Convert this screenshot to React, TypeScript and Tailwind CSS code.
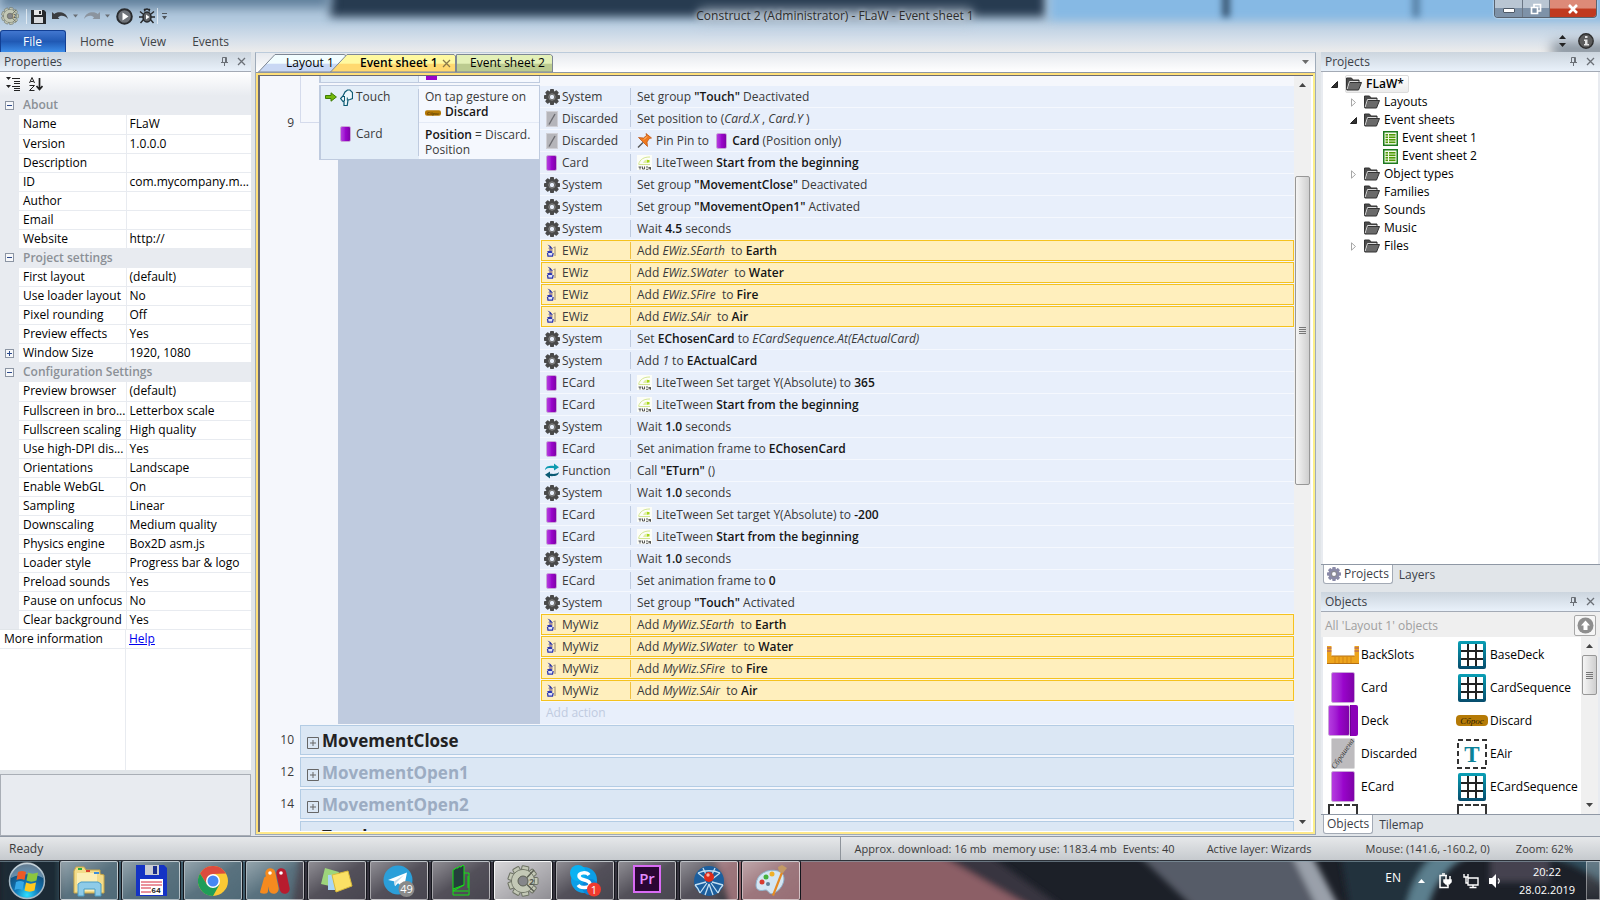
import type { ReactNode } from "react";
import clsx from "clsx";

/* ---------- icons ---------- */

function Gear({ size = 16, color = "#4a4a4a", hole = "#e8effb", teeth = 8 }: { size?: number; color?: string; hole?: string; teeth?: number }) {
  return (
    <svg width={size} height={size} viewBox="0 0 16 16" className="shrink-0">
      {Array.from({ length: teeth }, (_, i) => (
        <rect key={i} x="6" y="0" width="4" height="5" rx="0.8" fill={color} transform={`rotate(${(i * 360) / teeth} 8 8)`} />
      ))}
      <circle cx="8" cy="8" r="6.2" fill={color} />
      <circle cx="8" cy="8" r="3.2" fill="none" stroke="#8a8a8a" strokeWidth="1" />
      <circle cx="8" cy="8" r="2.2" fill={hole} />
    </svg>
  );
}

function ConstructLogo({ size }: { size: number }) {
  return (
    <svg width={size} height={size} viewBox="0 0 32 32" className="shrink-0">
      <g fill="#c3c8b6" stroke="#6d7264" strokeWidth="1">
        {Array.from({ length: 9 }, (_, i) => (
          <rect key={i} x="12.500" y="1" width="7" height="8" rx="1" transform={`rotate(${i * 40 + 10} 16 16)`} />
        ))}
        <circle cx="16" cy="16" r="11.500" />
      </g>
      <circle cx="16" cy="16" r="10.800" fill="#c3c8b6" />
      <circle cx="16" cy="16" r="5" fill="#85868a" stroke="#5b5f54" />
      <path d="M20 12.500L27 5M20 19.500l7 7" stroke="#5b5f54" strokeWidth="1.500" />
      <text x="24.500" y="19.500" textAnchor="middle" fontSize="9" fontWeight="bold" fill="#55594f">2</text>
    </svg>
  );
}

function PurpleCard({ className = "h-4 w-[11px]" }: { className?: string }) {
  return (
    <span
      className={clsx(
        "inline-block shrink-0 rounded-[2px] border border-[#c9a6d8] bg-linear-to-r from-[#b53be0] via-[#9a05cc] to-[#7f02a8]",
        className
      )}
    />
  );
}

function GreyCard() {
  return (
    <svg width="12" height="16" viewBox="0 0 12 16" className="shrink-0">
      <rect x="0.500" y="0.500" width="11" height="15" fill="#b5b5ba" stroke="#d0d0d6" />
      <path d="M3 13.500L9 3" stroke="#6c6c72" strokeWidth="1.400" />
    </svg>
  );
}

function Wizard() {
  return (
    <svg width="11" height="13" viewBox="0 0 11 13" className="shrink-0">
      <path d="M1.500.5l3 1.500 2.500 3-5-.8 2-1z" fill="#2731a8" />
      <path d="M3 5h3.500v2H3.500z" fill="#a88f9a" />
      <path d="M1 7.500c1.500-1 4-1 5.500 0L6 9H2z" fill="#2c37b4" />
      <path d="M2.500 9h4v3h-4z" fill="#dfe3f4" />
      <path d="M1.500 9l.5 3.200h4.500L7.200 9" fill="none" stroke="#2c37b4" strokeWidth="1.300" />
      <path d="M9 3v9M7.500 4L9 2.500" fill="none" stroke="#8a7a6a" strokeWidth="0.900" />
    </svg>
  );
}

function FunctionIcon() {
  return (
    <svg width="16" height="16" viewBox="0 0 16 16" className="shrink-0">
      <path d="M1 7C1.500 3.500 4 2.700 10 2.900V.5l5 3.700-5 3.400V5.200C5 5 3 5 1 7z" fill="#0c9ab0" />
      <path d="M15 9c-.5 3.500-3 4.300-9 4.100v2.400L1 11.800l5-3.400v2.400c5 .2 7 .2 9-1.800z" fill="#0b5a74" />
    </svg>
  );
}

function TweenIcon() {
  return (
    <svg width="15" height="15" viewBox="0 0 15 15" className="mr-1 inline-block align-[-3px]">
      <rect width="15" height="15" fill="#fcfdf8" />
      <path d="M1.500 9.500C3 4 7 2 13 2M2 9.500h11" fill="none" stroke="#d3e692" strokeWidth="1" />
      <path d="M6 8c.8-2.500 2.500-3.500 5-3.500V8z" fill="#e0f0a4" />
      <rect x="10" y="5" width="2.500" height="2.500" fill="#a6d61c" />
      <path d="M1.500 12h3M3 12v2.500M5.500 11.500v2.500h2v-2.500M9 12h2M9 14.300h2M12 14.500V12l1.500 2.500V12" fill="none" stroke="#333" strokeWidth="0.800" />
    </svg>
  );
}

function PinIcon() {
  return (
    <svg width="15" height="15" viewBox="0 0 15 15" className="mr-1 inline-block align-[-3px]">
      <path d="M6 9.500L1 14.500" stroke="#555" strokeWidth="1.400" />
      <path d="M1.500 4.500l5 .5L9.500 2.500 9 .5 14.500 5l-2.200.6-2.300 3.400.5 4.500z" fill="#f07a1e" stroke="#b84c0a" strokeWidth="0.700" />
      <path d="M7 6.500l3-3" stroke="#ffc48a" strokeWidth="1" />
    </svg>
  );
}

function Folder() {
  return (
    <svg width="16" height="14" viewBox="0 0 16 14" className="shrink-0">
      <path d="M.5 12.500V1h5l1.500 2h6v2" fill="#4b4b4b" stroke="#333" />
      <path d="M3.500 5.500h12l-3 7.500H.8z" fill="#6a6a6a" stroke="#333" />
      <path d="M3.500 4.500L1.200 12" stroke="#ddd" strokeWidth="1" />
      <path d="M3.500 4.500h9" stroke="#ddd" strokeWidth="1" />
    </svg>
  );
}

function SheetIcon() {
  return (
    <svg width="15" height="15" viewBox="0 0 15 15" className="shrink-0">
      <rect x="0.750" y="0.750" width="13.500" height="13.500" fill="#f3fbe6" stroke="#1e7a1e" strokeWidth="1.500" />
      {[3, 5.5, 8, 10.5].map((y) => (
        <g key={y} fill="#4f9a06">
          <rect x="2.500" y={y} width="2.500" height="1.600" />
          <rect x="6" y={y} width="6.500" height="1.600" />
        </g>
      ))}
    </svg>
  );
}

function ArrayIcon() {
  return (
    <svg width="28" height="28" viewBox="0 0 28 28">
      <defs>
        <linearGradient id="array-frame" x1="0" y1="0" x2="0" y2="1">
          <stop offset="0" stopColor="#0aa0b6" />
          <stop offset="1" stopColor="#064c6c" />
        </linearGradient>
      </defs>
      <rect width="28" height="28" rx="2" fill="url(#array-frame)" />
      <rect x="3" y="3" width="22" height="22" fill="#222" />
      {[3, 11, 19].map((x) => [3, 11, 19].map((y) => <rect key={`${x}-${y}`} x={x} y={y} width="6" height="6" fill="#fff" />))}
    </svg>
  );
}

function TextObjectIcon() {
  return (
    <svg width="30" height="30" viewBox="0 0 30 30">
      <rect x="1" y="1" width="28" height="28" fill="none" stroke="#333" strokeWidth="2" strokeDasharray="5 3" />
      <text x="15" y="23" textAnchor="middle" fontFamily="Liberation Serif, serif" fontWeight="bold" fontSize="23" fill="#0b8299">T</text>
    </svg>
  );
}

function BackSlotsIcon() {
  return (
    <svg width="32" height="18" viewBox="0 0 32 18">
      <path d="M0 0h4.500v10h23V0H32v18H0z" fill="#eda41c" />
      <path d="M0 17.500h32M4.500 10h23" stroke="#b56f10" />
      <path d="M8 11v6M12 11v6M16 11v6M20 11v6M24 11v6" stroke="#d48512" />
      <path d="M0 5h4.500M27.500 5H32M0 2h4.500M27.500 2H32" stroke="#a0567a" />
    </svg>
  );
}

function DiscardIcon({ small = false }: { small?: boolean }) {
  return (
    <svg width={small ? 16 : 32} height={small ? 6 : 11} viewBox="0 0 32 11" className={small ? "mr-1 inline-block" : ""}>
      <rect width="32" height="11" rx="4" fill="#b57a06" />
      <text x="16" y="8.500" textAnchor="middle" fontFamily="Liberation Serif, serif" fontStyle="italic" fontSize="9" fill="#2c1c02">Сброс</text>
    </svg>
  );
}

function DiscardedIcon() {
  return (
    <svg width="24" height="31" viewBox="0 0 24 31">
      <rect x="0.500" y="0.500" width="23" height="30" rx="1" fill="#bdbbbe" stroke="#d9d8da" />
      <text x="12" y="18" textAnchor="middle" transform="rotate(-56 12 16)" fontFamily="Liberation Serif, serif" fontStyle="italic" fontSize="8" fill="#333">Сброшена</text>
    </svg>
  );
}

function DeckIcon() {
  return (
    <span className="flex">
      <PurpleCard className="h-[31px] w-[22px]" />
      <span className="h-[31px] w-2 rounded-r-[2px] border-l border-[#6d0292] bg-[#8b02b8]" />
    </span>
  );
}

function Expander({ open }: { open: boolean }) {
  return (
    <svg width="9" height="9" viewBox="0 0 9 9" className="block">
      <rect x="0.500" y="0.500" width="8" height="8" fill="#f7f8fa" stroke="#8c95a3" />
      <path d={open ? "M2 4.500h5" : "M2 4.500h5M4.500 2v5"} stroke="#2c4a8c" />
    </svg>
  );
}

function Tri({ dir, className = "" }: { dir: "up" | "down"; className?: string }) {
  return (
    <svg width="7" height="4" viewBox="0 0 7 4" className={className} fill="currentColor">
      <path d={dir === "up" ? "M0 4L3.500 0 7 4z" : "M0 0h7L3.500 4z"} />
    </svg>
  );
}

/* ---------- properties panel ---------- */

type Prop = { name: string; value: string; expandable?: boolean };

const PROPERTIES: { title: string; rows: Prop[] }[] = [
  {
    title: "About",
    rows: [
      { name: "Name", value: "FLaW" },
      { name: "Version", value: "1.0.0.0" },
      { name: "Description", value: "" },
      { name: "ID", value: "com.mycompany.m..." },
      { name: "Author", value: "" },
      { name: "Email", value: "" },
      { name: "Website", value: "http://" },
    ],
  },
  {
    title: "Project settings",
    rows: [
      { name: "First layout", value: "(default)" },
      { name: "Use loader layout", value: "No" },
      { name: "Pixel rounding", value: "Off" },
      { name: "Preview effects", value: "Yes" },
      { name: "Window Size", value: "1920, 1080", expandable: true },
    ],
  },
  {
    title: "Configuration Settings",
    rows: [
      { name: "Preview browser", value: "(default)" },
      { name: "Fullscreen in bro...", value: "Letterbox scale" },
      { name: "Fullscreen scaling", value: "High quality" },
      { name: "Use high-DPI dis...", value: "Yes" },
      { name: "Orientations", value: "Landscape" },
      { name: "Enable WebGL", value: "On" },
      { name: "Sampling", value: "Linear" },
      { name: "Downscaling", value: "Medium quality" },
      { name: "Physics engine", value: "Box2D asm.js" },
      { name: "Loader style", value: "Progress bar & logo" },
      { name: "Preload sounds", value: "Yes" },
      { name: "Pause on unfocus", value: "No" },
      { name: "Clear background", value: "Yes" },
    ],
  },
];

function PanelHeader({ title }: { title: string }) {
  return (
    <div className="flex h-5 shrink-0 items-center justify-between border-b border-[#a3aab5] bg-linear-to-b from-[#ccd5de] to-[#e9f1fa] px-1 text-[#3b4148]">
      <h2>{title}</h2>
      <div className="flex items-center gap-2 pr-px text-[#6b7077]">
        <button aria-label={`Pin ${title}`}>
          <svg width="9" height="9" viewBox="0 0 9 9" fill="none" stroke="currentColor">
            <path d="M2.500 5.500v-5h4v5M1 5.500h7M4.500 5.500V9M5.500.5v5" />
          </svg>
        </button>
        <button aria-label={`Close ${title}`}>
          <svg width="9" height="9" viewBox="0 0 9 9" fill="none" stroke="currentColor" strokeWidth="1.300">
            <path d="M1 1l7 7M8 1L1 8" />
          </svg>
        </button>
      </div>
    </div>
  );
}

function PropertiesPanel() {
  return (
    <aside className="flex w-[251px] shrink-0 flex-col text-black">
      <PanelHeader title="Properties" />
      <div className="flex h-6 shrink-0 items-center gap-2 bg-linear-to-b from-white to-[#e8ebf0] px-[6px] text-[#222]">
        <button aria-label="Categorized">
          <svg width="15" height="14" viewBox="0 0 15 14" fill="currentColor">
            <path d="M0 0h5L2.500 3zM0 8h5L2.500 11zM6 1h8v1H6zM8 4h6v1H8zM8 6h6v1H8zM6 9h8v1H6zM8 11h6v1H8zM8 13h6v1H8z" />
          </svg>
        </button>
        <button aria-label="Sort alphabetically">
          <svg width="14" height="14" viewBox="0 0 14 14" fill="none" stroke="currentColor">
            <path d="M.5 6L3 .5 5.500 6M1.500 4.500h3M.5 8.500h5l-5 5h5" />
            <path d="M10.500 1v11M7.500 9l3 3.500 3-3.500" strokeWidth="1.700" />
          </svg>
        </button>
      </div>
      <table className="w-full table-fixed border-collapse leading-[17px]">
        <colgroup>
          <col className="w-[19px]" />
          <col className="w-[107px]" />
          <col />
        </colgroup>
        {PROPERTIES.map((group) => (
          <tbody key={group.title}>
            <tr className="h-[19px] bg-[#e8ebf0]">
              <td className="p-0 pl-[5px]">
                <Expander open />
              </td>
              <th colSpan={2} className="p-0 pb-[2px] pl-1 text-left font-semibold text-[#8b9096]">
                {group.title}
              </th>
            </tr>
            {group.rows.map((row) => (
              <tr key={row.name} className="h-[19px]">
                <td className="bg-[#e8ebf0] p-0 pl-[5px]">{row.expandable && <Expander open={false} />}</td>
                <td className="overflow-hidden border-r border-b border-[#e8ebf0] bg-white p-0 pb-px pl-1 whitespace-nowrap">{row.name}</td>
                <td className="overflow-hidden border-b border-[#e8ebf0] bg-white p-0 pb-px pl-[3px] whitespace-nowrap">{row.value}</td>
              </tr>
            ))}
          </tbody>
        ))}
      </table>
      <div className="flex flex-1 flex-col bg-white">
        <div className="flex h-[19px] items-center border-b border-[#e8ebf0]">
          <span className="h-full w-[126px] border-r border-[#e8ebf0] pl-1">More information</span>
          <a href="#help" className="pl-[3px] text-[#0000ee] underline">
            Help
          </a>
        </div>
        <div className="w-[126px] flex-1 border-r border-[#e8ebf0]" />
      </div>
      <div className="mt-1 h-[62px] shrink-0 border border-[#a9aeb6] bg-[#e8ebf0]" />
    </aside>
  );
}

/* ---------- event sheet ---------- */

type IconName = "system" | "card" | "discarded" | "wiz" | "function";
type Action = { icon: IconName; object: string; text: ReactNode; selected?: boolean };

const B = ({ children }: { children: ReactNode }) => <b className="font-semibold text-[#151515]">{children}</b>;

const system = (text: ReactNode): Action => ({ icon: "system", object: "System", text });
const eCard = (text: ReactNode): Action => ({ icon: "card", object: "ECard", text });
const wait = (s: string) => system(<>Wait <B>{s}</B> seconds</>);
const wiz = (object: string, element: string): Action => ({
  icon: "wiz",
  object,
  selected: true,
  text: (
    <>
      Add <i>{object}.S{element}</i>&nbsp; to <B>{element}</B>
    </>
  ),
});
const tweenStart = <><TweenIcon />LiteTween <B>Start from the beginning</B></>;

const ACTIONS: Action[] = [
  system(<>Set group <B>"Touch"</B> Deactivated</>),
  { icon: "discarded", object: "Discarded", text: <>Set position to (<i>Card.X</i> , <i>Card.Y</i> )</> },
  {
    icon: "discarded",
    object: "Discarded",
    text: <><PinIcon />Pin Pin to <PurpleCard className="mr-[2px] ml-1 h-4 w-[11px] align-[-4px]" /> <B>Card</B> (Position only)</>,
  },
  { icon: "card", object: "Card", text: tweenStart },
  system(<>Set group <B>"MovementClose"</B> Deactivated</>),
  system(<>Set group <B>"MovementOpen1"</B> Activated</>),
  wait("4.5"),
  wiz("EWiz", "Earth"),
  wiz("EWiz", "Water"),
  wiz("EWiz", "Fire"),
  wiz("EWiz", "Air"),
  system(<>Set <B>EChosenCard</B> to <i>ECardSequence.At(EActualCard)</i></>),
  system(<>Add <i>1</i> to <B>EActualCard</B></>),
  eCard(<><TweenIcon />LiteTween Set target Y(Absolute) to <B>365</B></>),
  eCard(tweenStart),
  wait("1.0"),
  eCard(<>Set animation frame to <B>EChosenCard</B></>),
  { icon: "function", object: "Function", text: <>Call <B>"ETurn"</B> ()</> },
  wait("1.0"),
  eCard(<><TweenIcon />LiteTween Set target Y(Absolute) to <B>-200</B></>),
  eCard(tweenStart),
  wait("1.0"),
  eCard(<>Set animation frame to <B>0</B></>),
  system(<>Set group <B>"Touch"</B> Activated</>),
  wiz("MyWiz", "Earth"),
  wiz("MyWiz", "Water"),
  wiz("MyWiz", "Fire"),
  wiz("MyWiz", "Air"),
];

const ACTION_ICONS: Record<IconName, ReactNode> = {
  system: <Gear />,
  card: <PurpleCard />,
  discarded: <GreyCard />,
  wiz: <Wizard />,
  function: <FunctionIcon />,
};

function ActionRow({ action }: { action: Action }) {
  const { icon, object, text, selected } = action;
  return (
    <div
      className={clsx(
        "flex h-[22px] items-center",
        selected ? "pb-px pl-px" : "border-b border-[#f5f8fe] bg-[#e8effb] pl-px"
      )}
    >
      <div className={clsx("flex h-full flex-1 items-center", selected ? "border border-[#f5c21e] bg-[#ffefbd]" : "border-x border-transparent")}>
        <div className="flex w-5 shrink-0 justify-start pl-[2px]">
          <span className={clsx("flex", icon !== "system" && icon !== "function" && "pl-[2px]")}>{ACTION_ICONS[icon]}</span>
        </div>
        <span className={clsx("flex h-[17px] w-[69px] shrink-0 items-center border-r", selected ? "border-[#f0c040]" : "border-[#bfcbdf]")}>
          {object}
        </span>
        <span className="pl-[6px] whitespace-nowrap">{text}</span>
      </div>
    </div>
  );
}

function Group({ line, name, active = false }: { line?: number; name: string; active?: boolean }) {
  return (
    <div className="mb-[2px] flex h-[30px] shrink-0">
      <span className="w-[34px] pt-[6px] text-right leading-[18px]">{line}</span>
      <div className="ml-[6px] flex flex-1 items-center gap-[3px] border border-[#b3cce4] bg-[#dbe7f4] pl-[6px]">
        <button aria-label={`Expand ${name}`} className="pt-[5px]">
          <svg width="12" height="12" viewBox="0 0 12 12" fill="none" stroke="#666">
            <path d="M.5.5h11v11H.5zM3 6h6M6 3v6" />
          </svg>
        </button>
        <h3 className={clsx("pt-px text-[17px] leading-6 font-bold", active ? "text-[#222]" : "text-[#9cacc2]")}>{name}</h3>
      </div>
    </div>
  );
}

function ScrollBar({ thumb }: { thumb: string }) {
  return (
    <div className="flex w-[17px] shrink-0 flex-col items-center bg-[#f0f0f0] text-[#444]">
      <Tri dir="up" className="my-[7px] shrink-0" />
      <div className="w-full flex-1">
        <div className={clsx("mx-auto flex w-[15px] flex-col items-center justify-center gap-px rounded-[2px] border border-[#979797] bg-linear-to-r from-[#f5f5f5] to-[#cfcfcf]", thumb)}>
          <span className="h-px w-[7px] bg-[#777]" />
          <span className="h-px w-[7px] bg-[#777]" />
          <span className="h-px w-[7px] bg-[#777]" />
          <span className="h-px w-[7px] bg-[#777]" />
        </div>
      </div>
      <Tri dir="down" className="my-[7px] shrink-0" />
    </div>
  );
}

function EventSheet() {
  return (
    <div className="flex min-w-0 flex-1 flex-col overflow-hidden bg-[#f5f7fc] text-[#3a3a3a]">
      {/* tail of the previous event */}
      <div className="flex h-[9px] shrink-0">
        <div className="ml-10 w-[19px] border-l border-[#d5dbec]" />
        <div className="flex h-[7px] w-[221px] border-x border-b border-l-2 border-[#bfcbdf] bg-[#e4eef8]">
          <div className="ml-[97px] flex-1 border-l border-[#bfcbdf] bg-[#f5f8fe] pl-[7px]">
            <div className="h-1 w-[11px] bg-[#9a05cc]" />
          </div>
        </div>
      </div>
      <div className="flex shrink-0">
        <div className="flex h-[75px] w-10 items-center justify-end pr-[6px]">9</div>
        <div className="h-[38px] w-[19px] border-b border-l border-[#d5dbec]" />
        <div className="flex w-[221px] flex-col">
          <div className="flex h-[75px] border border-l-2 border-[#bfcbdf] bg-[#e4eef8]">
            <div className="w-[97px]">
              <div className="flex h-[22px] items-center pl-1">
                <svg width="12" height="10" viewBox="0 0 12 10">
                  <path d="M.5 3.500H6V.8L11.400 5 6 9.200V6.500H.5z" fill="#74b80a" stroke="#3f7d06" />
                </svg>
                <svg width="13" height="17" viewBox="0 0 13 17" className="mr-[3px] ml-[3px]">
                  <path d="M4 16.500V12l-1 .5L.6 9.500 3 7l2-4 2.500-2H10l2.500 2.500v6L10 10.500l-2 .5-.8 5.500z" fill="#eef8fc" stroke="#0d5a72" strokeWidth="1.200" />
                  <path d="M4.500 12V8M7.300 11.500V8.500M3 7.500h2" stroke="#0d5a72" />
                </svg>
                Touch
              </div>
              <div className="mt-[15px] flex h-[22px] items-center gap-[5px] pl-[19px]">
                <PurpleCard />
                Card
              </div>
            </div>
            <div className="my-[3px] w-px bg-[#bfcbdf]" />
            <div className="flex-1 bg-[#f5f8fe] leading-[15px]">
              <p className="h-[37px] border-b border-[#e4eaf6] pt-[3px] pl-[6px]">
                On tap gesture on
                <br />
                <DiscardIcon small />
                <B>Discard</B>
              </p>
              <p className="pt-1 pl-[6px]">
                <B>Position</B> = Discard.
                <br />
                Position
              </p>
            </div>
          </div>
          <div className="ml-[19px] flex-1 bg-[#bfcbdf]" />
        </div>
        <div className="flex-1 pt-px">
          {ACTIONS.map((action, i) => (
            <ActionRow key={i} action={action} />
          ))}
          <button className="flex h-[22px] w-full items-center bg-[#e8effb] pl-[6px] text-[#c0cbe0]">Add action</button>
        </div>
      </div>
      <div className="mt-px">
        <Group line={10} name="MovementClose" active />
        <Group line={12} name="MovementOpen1" />
        <Group line={14} name="MovementOpen2" />
        <Group name="Touch" active />
      </div>
    </div>
  );
}

function DocTab({ label, variant }: { label: string; variant: "blue" | "active" | "green" }) {
  const fills = {
    blue: ["#f2fdff", "#c9d8f4", "w-[88px]", "M0.500 19L17 1.500h69l2 1V19z"],
    active: ["#fff9a0", "#ffd970", "w-[126px] -ml-4", "M0.500 19L17 1.500h107l1.500 1.500V19z"],
    green: ["#e3f0b8", "#bccb90", "w-[97px]", "M0.500 19V1.500h94l2 1.500V19z"],
  }[variant];
  return (
    <button role="tab" aria-selected={variant === "active"} className={clsx("relative h-[19px] shrink-0 whitespace-nowrap", fills[2])}>
      <svg className="absolute inset-0 h-full w-full" preserveAspectRatio="none">
        <linearGradient id={`tab-${variant}`} x1="0" y1="0" x2="0" y2="1">
          <stop offset="0.500" stopColor={fills[0]} />
          <stop offset="0.550" stopColor={fills[1]} />
          <stop offset="1" stopColor={fills[1]} />
        </linearGradient>
        <path d={fills[3]} fill={`url(#tab-${variant})`} stroke="#7e8794" />
      </svg>
      <span
        className={clsx(
          "relative flex h-full items-center justify-between pt-px text-black",
          variant === "active" ? "pr-[5px] pl-[30px] font-semibold" : variant === "blue" ? "pl-[28px]" : "pl-[14px]"
        )}
      >
        {label}
        {variant === "active" && (
          <svg width="9" height="9" viewBox="0 0 9 9" stroke="#8a7a4a" strokeWidth="1.300">
            <path d="M1 1l7 7M8 1L1 8" />
          </svg>
        )}
      </span>
    </button>
  );
}

function EditorArea() {
  return (
    <main className="mb-px flex min-w-0 flex-1 flex-col border border-[#9fabb9] border-t-[#bccbdb]">
      <div role="tablist" className="flex h-5 shrink-0 items-end border-b border-[#8e97a3] bg-linear-to-b from-[#e6e9ee] to-white pl-[2px]">
        <DocTab label="Layout 1" variant="blue" />
        <DocTab label="Event sheet 1" variant="active" />
        <DocTab label="Event sheet 2" variant="green" />
        <Tri dir="down" className="mr-[6px] mb-2 ml-auto text-[#6b6b6b]" />
      </div>
      <div className="flex min-h-0 flex-1 border-2 border-[#ffe07a] border-r-[#fdf08a] border-b-[#ffe98a]">
        <div className="flex min-w-0 flex-1 border-t border-l-2 border-[#6b6b72] bg-white pr-[2px] pb-px">
          <EventSheet />
          <ScrollBar thumb="mt-[82px] h-[309px]" />
        </div>
      </div>
    </main>
  );
}

/* ---------- right side ---------- */

const TREE: { label: string; depth: number; state?: "open" | "closed"; sheet?: boolean }[] = [
  { label: "FLaW*", depth: 0, state: "open" },
  { label: "Layouts", depth: 1, state: "closed" },
  { label: "Event sheets", depth: 1, state: "open" },
  { label: "Event sheet 1", depth: 2, sheet: true },
  { label: "Event sheet 2", depth: 2, sheet: true },
  { label: "Object types", depth: 1, state: "closed" },
  { label: "Families", depth: 1 },
  { label: "Sounds", depth: 1 },
  { label: "Music", depth: 1 },
  { label: "Files", depth: 1, state: "closed" },
];

const OBJECTS: { name: string; icon: ReactNode }[] = [
  { name: "BackSlots", icon: <BackSlotsIcon /> },
  { name: "BaseDeck", icon: <ArrayIcon /> },
  { name: "Card", icon: <PurpleCard className="h-[31px] w-6" /> },
  { name: "CardSequence", icon: <ArrayIcon /> },
  { name: "Deck", icon: <DeckIcon /> },
  { name: "Discard", icon: <DiscardIcon /> },
  { name: "Discarded", icon: <DiscardedIcon /> },
  { name: "EAir", icon: <TextObjectIcon /> },
  { name: "ECard", icon: <PurpleCard className="h-[31px] w-6" /> },
  { name: "ECardSequence", icon: <ArrayIcon /> },
];

const INDENT = ["pl-2", "pl-[27px]", "pl-[60px]"];

function BottomTabs({ active, other, icon }: { active: string; other: string; icon?: boolean }) {
  return (
    <div role="tablist" className="flex h-5 shrink-0 items-start border-t border-[#8f98a5] pl-[2px] text-[#3b4148]">
      <button role="tab" aria-selected className="flex h-[19px] items-center gap-[3px] rounded-b-[3px] border border-t-0 border-[#a3aab5] bg-white px-[3px]">
        {icon && <Gear size={14} color="#8a8aa8" hole="#fff" />}
        {active}
      </button>
      <button role="tab" className="flex h-[19px] items-center px-[6px]">
        {other}
      </button>
    </div>
  );
}

function RightDock() {
  return (
    <aside className="flex w-[279px] shrink-0 flex-col pb-[2px] text-black">
      <PanelHeader title="Projects" />
      <ul role="tree" className="flex-1 border-x-2 border-[#e8ebf0] bg-white pt-[3px]">
        {TREE.map((node) => (
          <li key={node.label} role="treeitem" className={clsx("flex h-[18px] items-center", INDENT[node.depth])}>
            {!node.sheet && (
              <svg width="8" height="9" viewBox="0 0 8 9" className="mr-[6px] shrink-0">
                {node.state === "open" && <path d="M6.500 1.500v6h-6z" fill="#333" stroke="#222" />}
                {node.state === "closed" && <path d="M1.500.8v7.400l4-3.700z" fill="#fff" stroke="#a6a6a6" />}
              </svg>
            )}
            <span
              className={clsx(
                "flex items-center gap-1",
                node.depth === 0 && "h-[18px] rounded-[2px] border border-[#dcdcdc] bg-linear-to-b from-white to-[#ececec] pr-1 font-semibold"
              )}
            >
              {node.sheet ? <SheetIcon /> : <Folder />}
              {node.label}
            </span>
          </li>
        ))}
      </ul>
      <BottomTabs active="Projects" other="Layers" icon />
      <div className="mt-2 flex h-[242px] shrink-0 flex-col">
        <PanelHeader title="Objects" />
        <div className="flex h-[25px] shrink-0 items-center justify-between bg-[#efefef] pt-[2px] pl-1">
          <span className="text-[#a0a0a0]">All 'Layout 1' objects</span>
          <button aria-label="Up one level" className="mr-1 flex h-[21px] w-[22px] items-center justify-center rounded-[2px] border border-[#a8a8a8] bg-[#f6f6f6]">
            <svg width="17" height="17" viewBox="0 0 17 17">
              <circle cx="8.500" cy="8.500" r="8" fill="#8e8e8e" />
              <path d="M8.500 3.500l4.500 5h-2.500v4.500h-4V8.500H4z" fill="#fff" />
            </svg>
          </button>
        </div>
        <div className="flex min-h-0 flex-1 border-x-2 border-[#e8ebf0] bg-white">
          <div className="flex-1 overflow-hidden">
            <ul className="grid auto-rows-[33px] grid-cols-2 pt-px">
              {OBJECTS.map((o) => (
                <li key={o.name} className="flex items-center gap-[2px] pl-1 whitespace-nowrap">
                  <span className="flex w-8 shrink-0 items-center justify-center">{o.icon}</span>
                  {o.name}
                </li>
              ))}
            </ul>
            {/* top edges of the next row */}
            <div className="grid grid-cols-2 pt-px">
              <span className="ml-[5px] h-3 w-[30px] border-2 border-b-0 border-dashed border-[#333]" />
              <span className="ml-[5px] h-3 w-[30px] border-2 border-b-0 border-dashed border-[#333]" />
            </div>
          </div>
          <ScrollBar thumb="h-10" />
        </div>
        <BottomTabs active="Objects" other="Tilemap" />
      </div>
    </aside>
  );
}

/* ---------- window chrome ---------- */

function QuickAccess() {
  return (
    <div className="flex items-center gap-[9px] pt-[2px] pl-px text-[#2e3033]">
      <ConstructLogo size={18} />
      <button aria-label="Save" className="-ml-[2px] border-l border-white/60 pl-1">
        <svg width="15" height="15" viewBox="0 0 15 15">
          <path d="M0 1h13l2 2v12H0z" fill="#26282b" />
          <rect x="3" y="1" width="8" height="5" fill="#e6e6e6" />
          <rect x="8" y="2" width="2" height="3" fill="#26282b" />
          <rect x="3" y="8" width="9" height="6" fill="#d8dadd" />
        </svg>
      </button>
      <button aria-label="Undo" className="-ml-[3px] flex items-center gap-[5px]">
        <svg width="16" height="10" viewBox="0 0 16 10">
          <path d="M0 8V1l2.300 2C5 .5 14 0 16 8c-3-4-8-4-10-1.500L7.500 8z" fill="#3b3d40" />
        </svg>
        <Tri dir="down" className="w-[5px] text-[#6a6f75]" />
      </button>
      <button aria-label="Redo" className="-ml-[3px] flex items-center gap-[5px]">
        <svg width="16" height="10" viewBox="0 0 16 10">
          <path d="M16 8V1l-2.300 2C11 .5 2 0 0 8c3-4 8-4 10-1.500L8.500 8z" fill="#8b949e" />
        </svg>
        <Tri dir="down" className="w-[5px] text-[#6a6f75]" />
      </button>
      <button aria-label="Run layout" className="-ml-[3px]">
        <svg width="17" height="17" viewBox="0 0 17 17">
          <circle cx="8.500" cy="8.500" r="7.300" fill="#6e7278" stroke="#2a2c2f" strokeWidth="2" />
          <path d="M6.500 4.500l6 4-6 4z" fill="#fff" />
        </svg>
      </button>
      <button aria-label="Debug layout" className="-ml-[3px]">
        <svg width="16" height="16" viewBox="0 0 16 16">
          <ellipse cx="8" cy="9" rx="4" ry="5" fill="#606468" stroke="#26282b" strokeWidth="1.500" />
          <path d="M5.500 3.500a2.500 2.500 0 015 0M4 6L1 3.500M12 6l3-2.500M4 9H0M12 9h4M4.500 11.500L1.500 15M11.500 11.500l3 3.500M5 1l1.500 1.500M11 1L9.500 2.500" fill="none" stroke="#26282b" strokeWidth="1.400" />
          <path d="M7 6.500l3.500 2.500L7 11.500z" fill="#fff" />
        </svg>
      </button>
      <span className="-ml-[7px] h-4 w-px bg-white/60" />
      <svg width="5" height="7" viewBox="0 0 5 7" className="-ml-[5px]">
        <path d="M0 0h5v1H0zM0 3h5L2.500 6.500z" fill="#50565c" />
      </svg>
    </div>
  );
}

function TitleBar() {
  return (
    <header className="relative h-[52px] shrink-0 overflow-hidden bg-linear-to-b from-[#b4cbe0] from-40% via-[#d5dfea] via-75% to-[#ececec]">
      <div className="absolute inset-0">
        <div className="absolute -top-3 left-[330px] h-[29px] w-[715px] bg-[#273b50] blur-[5px]" />
        <div className="absolute -top-3 left-[1050px] h-[32px] w-[560px] bg-[#86b9e4] blur-[4px]" />
        <div className="absolute -top-3 left-[1222px] h-[29px] w-2 bg-[#3c5a76] blur-[3px]" />
        <div className="absolute -top-3 left-[1412px] h-[29px] w-2 bg-[#5983a8] blur-[3px]" />
        <div className="absolute -top-4 left-0 h-[24px] w-[330px] bg-[#5f7e9a] blur-[6px]" />
        <div className="absolute -right-4 bottom-[-6px] h-4 w-16 bg-[#85919d] blur-[6px]" />
        <div className="absolute top-[9px] left-[700px] h-[14px] w-[272px] bg-[#b9c5d2] opacity-80 blur-[6px]" />
      </div>
      <div className="relative flex h-[30px] items-center justify-between">
        <QuickAccess />
        <h1 className="absolute inset-x-0 pt-[2px] pl-[70px] text-center text-[#2c2c2c] [text-shadow:0_0_5px_#dfe6ee]">
          Construct 2 (Administrator) - FLaW - Event sheet 1
        </h1>
        <div className="relative mr-[3px] flex h-[18px] self-start overflow-hidden rounded-b-[4px] border border-t-0 border-[#59636f] shadow-[0_0_2px_#fff]">
          <button aria-label="Minimize" className="flex w-7 items-end justify-center border-r border-[#6b7684] bg-linear-to-b from-[#b9c6d3] from-50% to-[#7e92a8] to-50% pb-1">
            <span className="h-[5px] w-3 rounded-[1px] border border-[#4f5a67] bg-white" />
          </button>
          <button aria-label="Restore" className="flex w-[27px] items-center justify-center border-r border-[#6b7684] bg-linear-to-b from-[#b9c6d3] from-50% to-[#7e92a8] to-50%">
            <svg width="12" height="12" viewBox="0 0 12 12" fill="none" stroke="#fff" strokeWidth="1.700">
              <path d="M4 1.500h6.500V8H4z" />
              <path d="M1.500 4.500H7.500v6h-6z" fill="#7e92a8" />
            </svg>
          </button>
          <button aria-label="Close" className="flex w-[46px] items-center justify-center bg-linear-to-b from-[#dd8a78] from-45% to-[#c03a20] to-55%">
            <svg width="12" height="10" viewBox="0 0 12 10" stroke="#fff" strokeWidth="2.600">
              <path d="M2 1l8 8M10 1L2 9" />
            </svg>
          </button>
        </div>
      </div>
      <nav className="relative flex h-[22px] items-center text-[#3f4347]">
        <button className="h-full w-[66px] rounded-t-[3px] border border-b-0 border-[#123f94] bg-linear-to-b from-[#4277cf] via-[#2059b4] to-[#3c8ce8] pr-px text-white">File</button>
        <button className="pt-[2px] pl-[14px]">Home</button>
        <button className="pt-[2px] pl-[26px]">View</button>
        <button className="pt-[2px] pl-[26px]">Events</button>
        <div className="mr-[6px] ml-auto flex items-center gap-3 text-[#222]">
          <span className="flex flex-col gap-1">
            <Tri dir="up" />
            <Tri dir="down" />
          </span>
          <button aria-label="About">
            <svg width="16" height="16" viewBox="0 0 16 16">
              <circle cx="8" cy="8" r="7.200" fill="#5c5c5c" stroke="#2f2f2f" strokeWidth="1.400" />
              <path d="M7 3h2.500v2H7zM6 6.500h3.500V11H11v1.500H6V11h1V8H6z" fill="#e4e4e4" />
            </svg>
          </button>
        </div>
      </nav>
    </header>
  );
}

function StatusBar() {
  return (
    <footer className="flex h-[25px] shrink-0 items-center border-t border-b border-t-[#8f98a5] border-b-[#2c3138] bg-linear-to-b from-[#e6e8ea] to-[#c6cace] pr-[27px] pl-[9px] text-[11px] whitespace-nowrap text-[#3b3b3b]">
      <span className="flex-1 text-[12px]">Ready</span>
      <span className="flex h-full items-center gap-[6px] border-l border-[#8e949b] pl-[14px]">
        <span>Approx. download: 16 mb</span>
        <span>memory use: 1183.4 mb</span>
        <span>Events: 40</span>
      </span>
      <span className="pl-8">Active layer: Wizards</span>
      <span className="pl-[54px]">Mouse: (141.6, -160.2, 0)</span>
      <span className="pl-[26px]">Zoom: 62%</span>
    </footer>
  );
}

const TASKS: { name: string; icon: ReactNode; active?: boolean }[] = [
  {
    name: "Explorer",
    icon: (
      <svg width="32" height="32" viewBox="0 0 32 32">
        <path d="M1 6l2-4h8l2 3h14v4l4 1v18H1z" fill="#f3dc8a" stroke="#c9a646" />
        <path d="M4 8h20v18H4z" fill="#fbeeb5" />
        <path d="M5 3h4v2H5z" fill="#2fae3c" />
        <path d="M13 5h4v2h-4z" fill="#d8432b" />
        <path d="M21 7h5v2h-5z" fill="#3d8fd8" />
        <path d="M5 19l3-2h17l3 2v12h-6v-7H11v7H5z" fill="#8ecbe8" stroke="#4b9cc4" />
      </svg>
    ),
  },
  {
    name: "Total Commander",
    icon: (
      <svg width="31" height="31" viewBox="0 0 31 31">
        <path d="M0 0h28l3 3v28H0z" fill="#1433c4" />
        <rect x="9" y="0" width="14" height="10" fill="#c9ccd2" />
        <rect x="17" y="1" width="4" height="8" fill="#1a2f8c" />
        <rect x="4" y="14" width="23" height="16" fill="#fff" />
        <path d="M5 17h21M5 20h21M5 23h10M5 27h10" stroke="#d4263a" />
        <text x="20" y="28" textAnchor="middle" fontFamily="Liberation Mono, monospace" fontSize="8" fontWeight="bold" fill="#222">64</text>
      </svg>
    ),
  },
  {
    name: "Chrome",
    icon: (
      <svg width="30" height="30" viewBox="0 0 30 30">
        <circle cx="15" cy="15" r="15" fill="#fcc934" />
        <path d="M2 7.500A15 15 0 0128 7.500L15 8 9 18.500z" fill="#dd4b3e" />
        <path d="M2 7.500A15 15 0 0015 30l6.500-11.500L9 18.500z" fill="#1f9d58" />
        <circle cx="15" cy="15" r="7" fill="#fff" />
        <circle cx="15" cy="15" r="5.500" fill="#4587f4" />
      </svg>
    ),
  },
  {
    name: "MODX",
    icon: (
      <svg width="30" height="26" viewBox="0 0 30 26">
        <path d="M0 24L4 10c2-3 4-1 4 2v11c0 4-8 3-8 1z" fill="#f58a1f" />
        <rect x="7" y="0" width="10" height="26" rx="5" transform="rotate(-12 12 13)" fill="#f58a1f" />
        <rect x="18" y="0" width="10" height="26" rx="5" transform="rotate(-12 23 13)" fill="#b81c2e" />
        <circle cx="10" cy="5" r="1.800" fill="#fff" />
        <circle cx="21" cy="5" r="1.800" fill="#fff" />
      </svg>
    ),
  },
  {
    name: "Sticky notes",
    icon: (
      <svg width="32" height="26" viewBox="0 0 32 26">
        <path d="M4 0l14 4-5 15-13-3z" fill="#9ed67c" />
        <path d="M7 7l15-1v16H7z" fill="#a8d6f5" />
        <path d="M11 7l16-4 4 15-16 6z" fill="#fbe165" stroke="#d9b93a" />
      </svg>
    ),
  },
  {
    name: "Telegram",
    icon: (
      <svg width="32" height="32" viewBox="0 0 32 32">
        <circle cx="15" cy="15" r="14.500" fill="#2b9fd9" />
        <path d="M5 15l19-7.500-3 15-6-4.300-3 3-1-5z" fill="#fff" />
        <path d="M11 16.500l10-6.500-8 8-1 3z" fill="#c5dbe8" />
        <circle cx="23.500" cy="24" r="8" fill="#8a8a8a" />
        <text x="23.500" y="28" textAnchor="middle" fontSize="11" fill="#fff">49</text>
      </svg>
    ),
  },
  {
    name: "Notebook",
    icon: (
      <svg width="20" height="32" viewBox="0 0 20 32" stroke="#13e413" fill="none">
        <path d="M2 5l2-1 1-1 2 0 1-1.500 2 .5 2-2 1 1v19L2 24z" fill="#243f3c" />
        <path d="M2 24v6h16V8h-5M13 20l-11 6h15M17 11v12" />
      </svg>
    ),
  },
  { name: "Construct 2", active: true, icon: <ConstructLogo size={32} /> },
  {
    name: "Skype",
    icon: (
      <svg width="32" height="32" viewBox="0 0 32 32">
        <circle cx="15" cy="15" r="13" fill="#0b9fe8" />
        <circle cx="9" cy="8" r="8" fill="#0ab2f2" />
        <circle cx="21" cy="22" r="8" fill="#0a86d8" />
        <path d="M20 10c-2-3-10-3-10 1 0 5 11 3 11 8 0 4-9 5-12 1" fill="none" stroke="#fff" strokeWidth="3.500" />
        <circle cx="25" cy="24.500" r="7" fill="#f03a2e" />
        <text x="25" y="28.500" textAnchor="middle" fontSize="11" fill="#fff">1</text>
      </svg>
    ),
  },
  {
    name: "Premiere Pro",
    icon: (
      <svg width="28" height="28" viewBox="0 0 28 28" className="-mt-[3px]">
        <rect x="1" y="1" width="26" height="26" fill="#2a0634" stroke="#d96bf5" strokeWidth="2" />
        <text x="14" y="19" textAnchor="middle" fontSize="15" fontWeight="600" fill="#e28cff">Pr</text>
      </svg>
    ),
  },
  {
    name: "Network",
    icon: (
      <svg width="32" height="32" viewBox="0 0 32 32">
        <circle cx="16" cy="16" r="15" fill="#1c5f9e" />
        <path d="M14 15L5 8M15 14l-5-11M17 14l5-11M18 15l9-7M13 17L2 20M19 17l11 3M14 18L7 28M16 19l-4 11M16 19l4 11M18 18l7 10" stroke="#c3dff2" strokeWidth="1.300" />
        <path d="M5 8c6-3 16-3 22 0M2 20c2 2 4 5 5 8M30 20c-2 2-4 5-5 8" fill="none" stroke="#c3dff2" strokeWidth="1.300" />
        <circle cx="16" cy="12" r="5" fill="#dd2c1a" />
        <circle cx="15" cy="10" r="1.700" fill="#ffb4a6" />
      </svg>
    ),
  },
  {
    name: "Paint",
    icon: (
      <svg width="34" height="32" viewBox="0 0 34 32">
        <path d="M2 20C2 9 14 3 24 6s6 16-2 21-7-3-11-2-9 1-9-5z" fill="#d4e6f3" stroke="#8fb3cc" />
        <circle cx="8" cy="17" r="2.500" fill="#d83a2e" />
        <circle cx="12" cy="12" r="2.500" fill="#46b13c" />
        <circle cx="18" cy="9" r="2.500" fill="#f0b028" />
        <circle cx="14" cy="19" r="2" fill="#5f7f96" />
        <path d="M27 7l2 1-9 23-2-1z" fill="#e58a23" />
        <path d="M24 2l4-2 5 3-4 5-4-1z" fill="#c39a66" />
      </svg>
    ),
  },
];

function Taskbar() {
  return (
    <div className="relative flex h-[39px] shrink-0 items-stretch overflow-hidden bg-[#1c2028] text-white">
      <svg className="absolute inset-0 h-full w-full" viewBox="0 0 1600 39" preserveAspectRatio="none">
        <defs>
          <filter id="soft" x="-10%" y="-40%" width="120%" height="180%">
            <feGaussianBlur stdDeviation="3" />
          </filter>
        </defs>
        <g filter="url(#soft)">
          <path d="M0-9h60v57H0z" fill="#1d2a34" />
          <path d="M60-9h240v57H60z" fill="#3d5a69" />
          <path d="M300-9h420v57H290z" fill="#35323e" />
          <path d="M715-9h220l100 57H730z" fill="#8c5f66" />
          <path d="M935-9h50l80 57h-30z" fill="#37343f" />
          <path d="M1135-9h155l45 57h-140z" fill="#565c68" />
          <path d="M1290-9h20l30 57h-22z" fill="#9aa0aa" />
          <path d="M1340-9h100l-30 57h-60z" fill="#20303c" />
          <path d="M1440-9h36c-30 12-44 36-48 57h-22c4-22 16-48 34-57z" fill="#5b7f8e" />
          <path d="M1490-9h60v30h-60z" fill="#45434f" />
          <path d="M1530-9h80v40c-20-24-50-32-80-40z" fill="#33505e" />
        </g>
        <path d="M0 .5h1600" stroke="#8ba0ac" strokeOpacity="0.600" />
      </svg>
      <button aria-label="Start" className="relative mx-2 flex items-center">
        <svg width="38" height="38" viewBox="0 0 38 38">
          <defs>
            <radialGradient id="orb" cx="0.500" cy="0.900" r="0.850">
              <stop offset="0" stopColor="#2ee0ff" />
              <stop offset="0.400" stopColor="#1177b8" />
              <stop offset="1" stopColor="#123a5c" />
            </radialGradient>
          </defs>
          <circle cx="19" cy="19" r="17.500" fill="url(#orb)" stroke="#a5b8c4" strokeWidth="1.500" />
          <path d="M3 16a16 16 0 0132 0c-9-5-22-5-32 0z" fill="#fff" opacity="0.350" />
          <path d="M10 10c3-1.500 5-1.500 8 0l-1.500 8c-3-1.500-5-1.500-8 0z" fill="#ee5a24" />
          <path d="M20 10.500c3 1.500 6 1.500 10 0L28.500 18.500c-3 1.500-7 1.500-10 0z" fill="#8cc63e" />
          <path d="M8 20c3-1.500 5-1.500 8 0l-1.500 8c-3-1.500-5-1.500-8 0z" fill="#35a8e8" />
          <path d="M18 20.500c3 1.500 6 1.500 10 0L26.500 28.500c-3 1.500-7 1.500-10 0z" fill="#ffc91f" />
        </svg>
      </button>
      <div className="relative ml-[6px] flex gap-1">
        {TASKS.map((t) => (
          <button
            key={t.name}
            aria-label={t.name}
            className={clsx(
              "flex w-[58px] items-center justify-center rounded-[2px] border shadow-[0_0_0_1px_#14161c]",
              t.active
                ? "border-white/90 bg-linear-to-br from-white/80 to-white/45"
                : "border-white/50 bg-linear-to-br from-white/45 via-white/15 to-white/10"
            )}
          >
            {t.icon}
          </button>
        ))}
      </div>
      <div className="relative ml-auto flex items-center">
        <span className="-mt-[5px] mr-[17px]">EN</span>
        <Tri dir="up" className="mr-[13px]" />
        <svg width="16" height="16" viewBox="0 0 16 16" className="mr-[9px]" fill="none" stroke="#fff" strokeWidth="1.500">
          <path d="M9 2.500H2v12h8V12" />
          <path d="M4 1h3" />
          <path d="M6 7h7v2l-2 2H8L6 9zM8 7V3M12 7V3M9.500 11v2" fill="#fff" />
        </svg>
        <svg width="16" height="16" viewBox="0 0 16 16" className="mr-2" fill="none" stroke="#fff" strokeWidth="1.400">
          <path d="M5 5h10v7H5zM10 12v2.500M6.500 14.500h7M1 1v3h4V1M3 4v6h2" />
        </svg>
        <svg width="16" height="16" viewBox="0 0 16 16" fill="#fff">
          <path d="M2 5h3l4-4v14l-4-4H2z" />
          <path d="M11 5.500c1.500 1.500 1.500 3.500 0 5" fill="none" stroke="#fff" strokeWidth="1.200" />
        </svg>
        <div className="mr-[9px] ml-[14px] w-[60px] pt-px text-center text-[11px] leading-[18px]">
          <div>20:22</div>
          <div>28.02.2019</div>
        </div>
        <button aria-label="Show desktop" className="h-full w-[14px] border border-white/40 bg-linear-to-b from-white/25 to-white/5" />
      </div>
    </div>
  );
}

export default function App() {
  return (
    <div className="flex h-screen w-full flex-col overflow-hidden bg-[#e1e5e9] font-[family-name:'Open_Sans','Noto_Sans',sans-serif] text-[12px] leading-[18px]">
      <TitleBar />
      <div className="flex min-h-0 flex-1">
        <PropertiesPanel />
        <div className="w-1 shrink-0" />
        <EditorArea />
        <div className="w-[5px] shrink-0" />
        <RightDock />
      </div>
      <StatusBar />
      <Taskbar />
    </div>
  );
}
